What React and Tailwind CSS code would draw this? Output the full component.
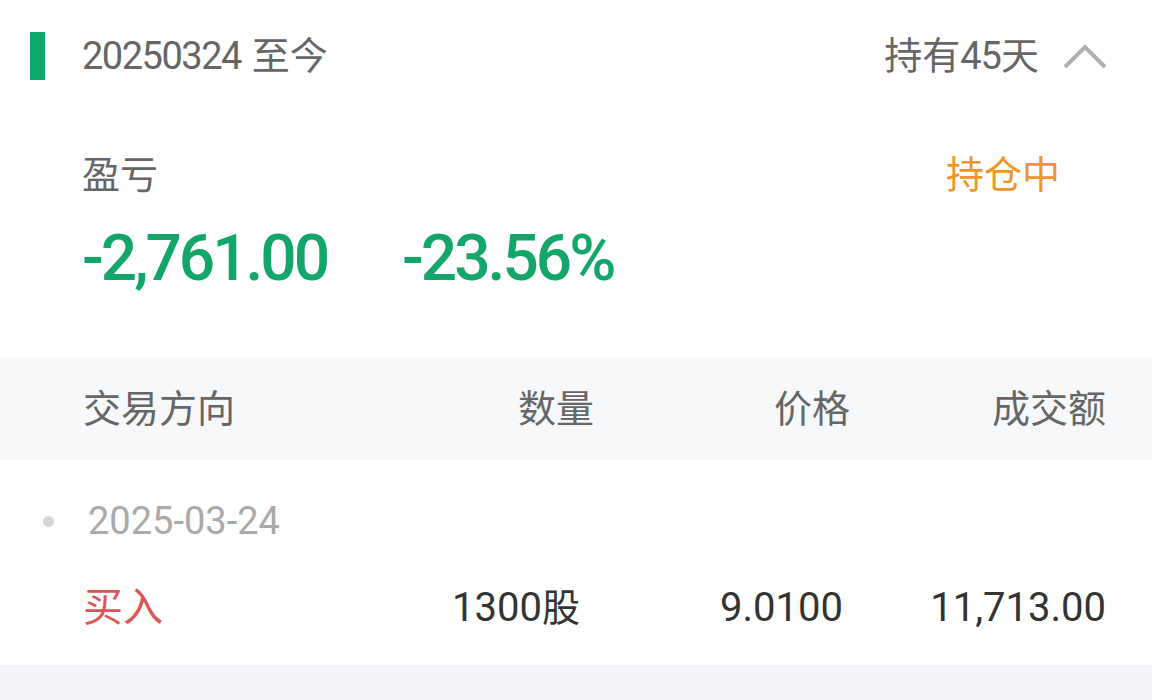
export default function App() {
  const font = { fontFamily: '"Roboto", "Noto Sans CJK SC", sans-serif' };
  return (
    <div className="w-[1152px] h-[700px] bg-white overflow-hidden" style={font}>
      {/* top header */}
      <div className="h-[112px] flex items-center pl-[30px] pr-[45px]">
        <div className="w-[15px] h-[48px] bg-[#0caa6a]" />
        <div className="ml-[37px] text-[38px] leading-none text-[#666666] flex items-center">
          <span className="tracking-[-1.5px]">20250324</span>
          <span className="ml-[11px]">至今</span>
        </div>
        <div className="ml-auto flex items-center text-[38px] leading-none text-[#666666]">
          <span>持有</span>
          <span className="tracking-[-1px]">45</span>
          <span>天</span>
          <svg className="ml-[24px]" width="44" height="28" viewBox="0 0 44 28">
            <polyline points="2,25 22,5 42,25" fill="none" stroke="#b0b0b0" strokeWidth="4" />
          </svg>
        </div>
      </div>

      {/* profit section */}
      <div className="h-[246px] pt-[38px] pl-[82px] pr-[92px]">
        <div className="h-[50px] flex items-center justify-between leading-none">
          <span className="text-[#666666] text-[38px]">盈亏</span>
          <span className="text-[#f0952c] text-[38px]">持仓中</span>
        </div>
        <div className="mt-[21px] h-[76px] flex items-center text-[64px] leading-none font-medium text-[#12a66b] tracking-[-3px]">
          <span>-2,761.00</span>
          <span className="ml-[75px]">-23.56%</span>
        </div>
      </div>

      {/* table header */}
      <div className="h-[102px] bg-[#f7f8fa] grid grid-cols-[351px_160px_256px_256px] items-center pl-[83px] pr-[46px] text-[38px] leading-none text-[#666666]">
        <span>交易方向</span>
        <span className="text-right">数量</span>
        <span className="text-right">价格</span>
        <span className="text-right">成交额</span>
      </div>

      {/* record */}
      <div className="h-[205px] pt-[33px]">
        <div className="h-[56px] flex items-center pl-[43px]">
          <div className="w-[11px] h-[11px] rounded-full bg-[#d6d6d6]" />
          <span className="ml-[34px] text-[38px] leading-none text-[#aaaaaa]">2025-03-24</span>
        </div>
        <div className="mt-[31px] h-[56px] grid grid-cols-[351px_160px_256px_256px] items-center pl-[83px] pr-[46px] text-[40px] leading-none text-[#333333]">
          <span className="text-[#d95757] text-[40px]">买入</span>
          <span className="text-right pr-[14px]">1300<span className="text-[38px]">股</span></span>
          <span className="text-right pr-[7px]">9.0100</span>
          <span className="text-right">11,713.00</span>
        </div>
      </div>

      {/* bottom */}
      <div className="h-[35px] bg-[#f3f4f8]" />
    </div>
  );
}
